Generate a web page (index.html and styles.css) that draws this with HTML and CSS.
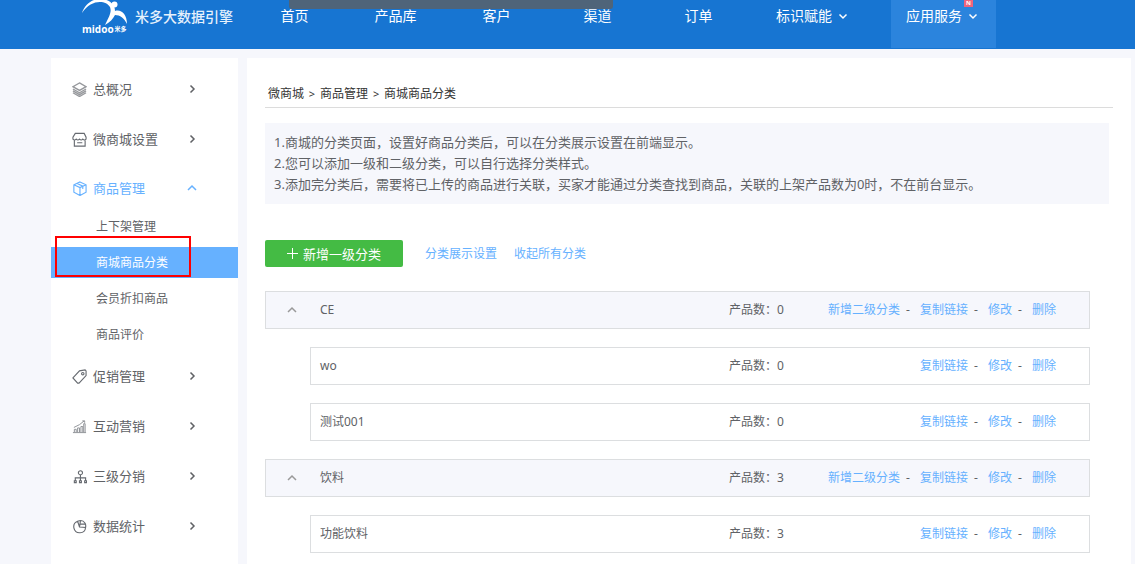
FILE: index.html
```html
<!DOCTYPE html>
<html lang="zh-CN">
<head>
<meta charset="utf-8">
<meta name="viewport" content="width=device-width, initial-scale=1">
<title>商城商品分类</title>
<link rel="stylesheet" href="styles.css">
</head>
<body>
<svg class="defs" aria-hidden="true">
  <symbol id="right" viewBox="0 0 10 10"><path d="M3.500 1.500L7 5 3.500 8.500"/></symbol>
  <symbol id="up" viewBox="0 0 10 10"><path d="M1 7l4-4 4 4"/></symbol>
  <symbol id="down" viewBox="0 0 10 10"><path d="M1.500 3.500L5 7l3.500-3.500"/></symbol>
</svg>

<header class="header">
  <a class="brand" href="#">
    <span class="logo">
      <svg class="logo-mark" viewBox="0 0 48 25" aria-hidden="true">
        <path d="M2 13C5 4 12-1 20-1c9 0 15 5 15 12 6-2 12 3 12 13-3-6-7-9-12-9-2 4-5 7-10 10 4-8 7-13 5-18C26 0 11-1 2 13z"/>
        <circle cx="34.500" cy="4.500" r="3"/>
      </svg>
      <span class="logo-name">midoo<small>米多</small></span>
    </span>
    <span class="brand-text">米多大数据引擎</span>
  </a>
  <nav class="nav">
    <a href="#">首页</a>
    <a href="#">产品库</a>
    <a href="#">客户</a>
    <a href="#">渠道</a>
    <a href="#">订单</a>
    <a class="has-menu" href="#">标识赋能<svg class="chev"><use href="#down"/></svg></a>
    <a class="has-menu active" href="#">应用服务<svg class="chev"><use href="#down"/></svg><span class="badge">N</span></a>
  </nav>
  <div class="top-strip"></div>
</header>

<div class="page">
  <aside class="sidebar">
    <ul class="menu">
      <li><a class="menu-link" href="#">
        <svg class="icon stack" viewBox="0 0 16 16"><path d="M8 1l7 4-7 4-7-4z M1 7.500l7 4 7-4 M1 9.500l7 4 7-4 M1 11.500l7 4 7-4"/></svg>
        <span>总概况</span><svg class="chev"><use href="#right"/></svg></a></li>
      <li><a class="menu-link" href="#">
        <svg class="icon" viewBox="0 0 16 16"><path d="M3.500 1.500h9.500l2 4v2q-1.700 2-3.500 0-1.700 2-3.500 0-1.700 2-3.500 0-1.800 2-3.500 0v-2z M2.500 9v6h11.500V9 M5.500 11.500h5.500"/></svg>
        <span>微商城设置</span><svg class="chev"><use href="#right"/></svg></a></li>
      <li><a class="menu-link open" href="#">
        <svg class="icon" viewBox="0 0 16 16"><path d="M8.500 1l6.500 3v8l-6.500 3.500L2 12V4z M2 4l6.500 3L15 4 M8.500 7v8.500 M5 2.500l6.500 3v3"/></svg>
        <span>商品管理</span><svg class="chev"><use href="#up"/></svg></a>
        <ul class="submenu">
          <li><a href="#">上下架管理</a></li>
          <li><a class="current" href="#">商城商品分类</a></li>
          <li><a href="#">会员折扣商品</a></li>
          <li><a href="#">商品评价</a></li>
        </ul></li>
      <li><a class="menu-link" href="#">
        <svg class="icon" viewBox="0 0 16 16"><path d="M1 9.500L8 2l6-1 1 1v5l-7.500 8H6z"/><circle cx="11.500" cy="5" r="1.300"/></svg>
        <span>促销管理</span><svg class="chev"><use href="#right"/></svg></a></li>
      <li><a class="menu-link" href="#">
        <svg class="icon soft" viewBox="0 0 16 16"><path d="M1 14.500h14 M2.500 14v-3h2v3 M6 14V9.500h2V14 M9.500 14V8h2v6 M12.500 14V5h1.500v9 M2 9l6-3 5-4 M11 2h2.500v2"/></svg>
        <span>互动营销</span><svg class="chev"><use href="#right"/></svg></a></li>
      <li><a class="menu-link" href="#">
        <svg class="icon" viewBox="0 0 16 16"><circle cx="9" cy="4" r="2.200"/><path d="M9 6.500V12 M3.500 12V9.500h11V12 M2.500 12.500h2v2h-2z M8 12.500h2v2H8z M13.500 12.500h2v2h-2z"/></svg>
        <span>三级分销</span><svg class="chev"><use href="#right"/></svg></a></li>
      <li><a class="menu-link" href="#">
        <svg class="icon" viewBox="0 0 16 16"><path d="M6 2.500a6.300 6.300 0 1 0 8.500 6.500L8 8.500z M6 2.500Q11 0 14 4.500 15 6.500 14.500 9 M8 8.500L9 2 M9 5.500h5"/></svg>
        <span>数据统计</span><svg class="chev"><use href="#right"/></svg></a></li>
    </ul>
  </aside>

  <main class="main">
    <nav class="crumbs"><a href="#">微商城</a><i>&gt;</i><a href="#">商品管理</a><i>&gt;</i><span>商城商品分类</span></nav>
    <div class="notice">
      <p>1.商城的分类页面，设置好商品分类后，可以在分类展示设置在前端显示。</p>
      <p>2.您可以添加一级和二级分类，可以自行选择分类样式。</p>
      <p>3.添加完分类后，需要将已上传的商品进行关联，买家才能通过分类查找到商品，关联的上架产品数为0时，不在前台显示。</p>
    </div>
    <div class="toolbar">
      <button class="add" type="button"><svg class="plus" viewBox="0 0 11 11"><path d="M5.500 0v11M0 5.500h11"/></svg>新增一级分类</button>
      <a href="#">分类展示设置</a>
      <a href="#">收起所有分类</a>
    </div>
    <ul class="rows">
      <li class="row parent">
        <button class="fold" type="button" aria-label="收起"><svg class="chev"><use href="#up"/></svg></button>
        <span class="name">CE</span><span class="count">产品数：0</span>
        <span class="actions"><a href="#">新增二级分类</a><i>-</i><a href="#">复制链接</a><i>-</i><a href="#">修改</a><i>-</i><a href="#">删除</a></span>
      </li>
      <li class="row child">
        <span class="name">wo</span><span class="count">产品数：0</span>
        <span class="actions"><a href="#">复制链接</a><i>-</i><a href="#">修改</a><i>-</i><a href="#">删除</a></span>
      </li>
      <li class="row child">
        <span class="name">测试001</span><span class="count">产品数：0</span>
        <span class="actions"><a href="#">复制链接</a><i>-</i><a href="#">修改</a><i>-</i><a href="#">删除</a></span>
      </li>
      <li class="row parent">
        <button class="fold" type="button" aria-label="收起"><svg class="chev"><use href="#up"/></svg></button>
        <span class="name">饮料</span><span class="count">产品数：3</span>
        <span class="actions"><a href="#">新增二级分类</a><i>-</i><a href="#">复制链接</a><i>-</i><a href="#">修改</a><i>-</i><a href="#">删除</a></span>
      </li>
      <li class="row child">
        <span class="name">功能饮料</span><span class="count">产品数：3</span>
        <span class="actions"><a href="#">复制链接</a><i>-</i><a href="#">修改</a><i>-</i><a href="#">删除</a></span>
      </li>
    </ul>
  </main>
</div>
</body>
</html>
```
FILE: styles.css
```css
*, ::before, ::after { box-sizing: border-box; }
body {
  margin: 0;
  min-height: 100vh;
  display: flex;
  flex-direction: column;
  background: #f6f7fc;
  color: #606266;
  font: 12px/18px "Noto Sans", "Noto Sans CJK SC", sans-serif;
}
ul { list-style: none; margin: 0; padding: 0; }
p { margin: 0; }
i { font-style: normal; }
a { color: inherit; text-decoration: none; }
button { font: inherit; border: 0; padding: 0; cursor: pointer; }
.defs { position: absolute; width: 0; height: 0; }
.chev {
  width: 10px;
  height: 10px;
  fill: none;
  stroke: currentColor;
  stroke-width: 1.5;
  flex: none;
}

/* header */
.header {
  position: relative;
  display: flex;
  height: 49px;
  padding-left: 80px;
  background: #1775d2;
  color: #fff;
  overflow: hidden;
}
.brand { display: flex; gap: 7px; width: 164px; flex: none; }
.logo { display: flex; flex-direction: column; width: 48px; }
.logo-mark { width: 48px; height: 25px; fill: #fff; }
.logo-name {
  display: flex;
  align-items: center;
  padding-left: 2px;
  font: bold 10px/9px "Open Sans", "Noto Sans CJK SC", sans-serif;
  white-space: nowrap;
}
.logo-name small { font-size: 6px; padding-left: 1px; }
.brand-text { font-size: 14px; font-weight: 500; line-height: 33px; color: #e6f1fc; white-space: nowrap; }
.nav { display: flex; font-size: 14px; line-height: 32px; white-space: nowrap; }
.nav a { position: relative; width: 101px; text-align: center; }
.nav .has-menu {
  display: flex;
  align-items: center;
  align-self: flex-start;
  gap: 6px;
  width: 105px;
  height: 48px;
  margin: 0 12px;
  padding: 0 15px 16px;
}
.nav .active { margin-left: 13px; background: #2b84dd; }
.badge {
  position: absolute;
  top: 0;
  right: 23px;
  width: 9px;
  height: 7px;
  background: #f0647c;
  font: bold 6px/7px "Open Sans", sans-serif;
}
.top-strip {
  position: absolute;
  top: 0;
  left: 289px;
  width: 324px;
  height: 9px;
  border-radius: 0 0 3px 3px;
  background: #4f6479;
}

/* layout */
.page { flex: 1; display: flex; gap: 9px; padding: 9px 4px 0 51px; }
.sidebar { flex: none; width: 187px; padding-top: 6px; background: #fff; }
.main { flex: 1; padding: 22px 18px 0; background: #fff; }

/* side menu */
.menu-link {
  display: flex;
  align-items: center;
  gap: 6px;
  padding: 13px 41px 13px 21px;
  font-size: 13px;
  line-height: 24px;
}
.menu-link span { flex: 1; }
.icon { width: 15px; height: 15px; fill: none; stroke: #666a70; stroke-width: 1.2; }
.soft { stroke: #8c8f94; stroke-width: 1; }
.stack { stroke: #96989c; stroke-width: 1.4; }
.open { color: #66b1ff; padding-top: 12px; padding-bottom: 11px; }
.open .icon { stroke: #66b1ff; }
.submenu { display: flex; flex-direction: column; gap: 5px; padding-bottom: 1px; }
.submenu a { position: relative; display: block; padding-left: 45px; line-height: 31px; }
.submenu .current { background: #66b1ff; color: #fff; }
.submenu .current::after {
  content: "";
  position: absolute;
  top: -11px;
  left: 4px;
  width: 136px;
  height: 41px;
  border: 2px solid #f00;
}

/* content */
.crumbs {
  display: flex;
  padding: 5px 3px 4px;
  border-bottom: 1px solid #dcdcdc;
  color: #333;
}
.crumbs i { width: 16px; text-align: center; font-size: 11px; }
.notice {
  margin: 15px 4px 0 0;
  padding: 9px;
  background: #f6f7fc;
  font-size: 13px;
  line-height: 21px;
}
.toolbar { display: flex; align-items: center; margin-top: 36px; gap: 17px; color: #66b1ff; }
.add {
  display: flex;
  align-items: center;
  justify-content: center;
  gap: 5px;
  width: 138px;
  height: 27px;
  margin-right: 5px;
  border-radius: 2px;
  background: #44bb44;
  color: #fff;
  font-size: 13px;
}
.plus { width: 11px; height: 11px; stroke: #fff; }
.rows { display: flex; flex-direction: column; gap: 18px; margin: 24px 23px 0 0; }
.row {
  display: flex;
  align-items: center;
  height: 38px;
  padding-right: 33px;
  border: 1px solid #dcdee0;
}
.parent { background: #f6f7fc; }
.child { margin-left: 45px; padding-left: 9px; }
.fold { display: flex; justify-content: center; width: 54px; padding-right: 3px; background: none; color: #999; }
.name { flex: 1; }
.count { width: 99px; }
.actions { display: flex; justify-content: flex-end; width: 228px; }
.actions a { color: #66b1ff; white-space: nowrap; }
.actions i { width: 20px; padding-left: 6px; }
```
